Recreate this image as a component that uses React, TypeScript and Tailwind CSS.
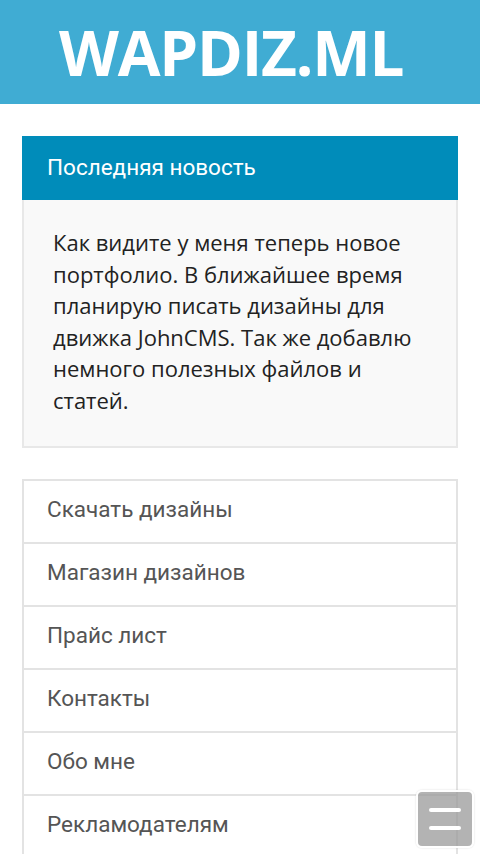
import React from 'react';

const links = [
  'Скачать дизайны',
  'Магазин дизайнов',
  'Прайс лист',
  'Контакты',
  'Обо мне',
  'Рекламодателям',
];

const App = () => {
  return (
    <div className="min-h-screen bg-white">
      <header className="h-[104px] bg-[#40acd3] flex items-center pl-[59px]">
        <h1 className="text-white font-bold text-[62px] leading-none tracking-[-1.2px] font-['Open_Sans',sans-serif]">
          WAPDIZ.ML
        </h1>
      </header>

      <main className="px-[22px] pt-[32px]">
        <section className="border-2 border-[#e8e8e8] bg-[#f9f9f9]">
          <div className="-mx-[2px] -mt-[2px] h-[64px] bg-[#008cba] flex items-center pl-[25px]">
            <h2 className="text-white text-[22.5px] font-['Roboto',sans-serif]">Последняя новость</h2>
          </div>
          <p className="px-[29px] pt-[27px] pb-[30px] text-[22px] leading-[31.5px] text-[#222] font-['Open_Sans',sans-serif]">
            Как видите у меня теперь новое портфолио. В ближайшее время планирую писать дизайны для
            движка JohnCMS. Так же добавлю немного полезных файлов и статей.
          </p>
        </section>

        <nav className="mt-[31px] border-2 border-b-0 border-[#e3e3e3]">
          {links.map((l) => (
            <a
              key={l}
              href="#"
              className="flex items-center h-[63px] pb-[4px] pl-[23px] border-b-2 border-[#e3e3e3] text-[22.5px] text-[#555] font-['Roboto',sans-serif]"
            >
              {l}
            </a>
          ))}
        </nav>
      </main>

      <button className="fixed right-[6px] bottom-[6px] w-[58px] h-[58px] rounded-[6px] border-2 border-white bg-[#999]/75 flex flex-col items-center justify-center gap-[14px] shadow-[0_0_2px_rgba(0,0,0,0.15)]">
        <span className="block w-[32px] h-[4px] rounded-full bg-white" />
        <span className="block w-[32px] h-[4px] rounded-full bg-white" />
      </button>
    </div>
  );
};

export default App;
